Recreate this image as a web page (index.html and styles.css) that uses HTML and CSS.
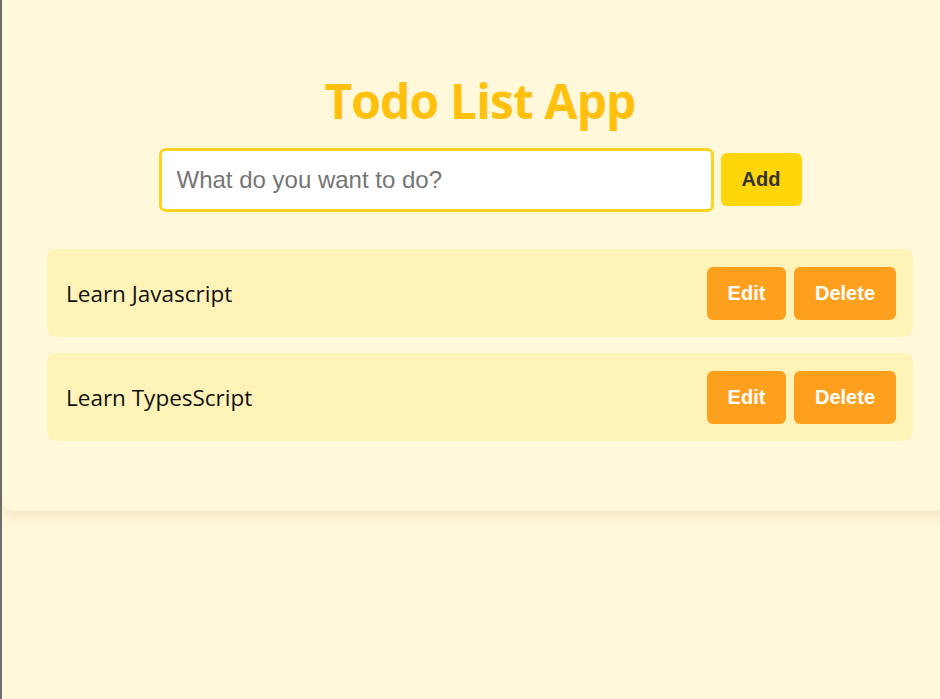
FILE: index.html
```html
<!DOCTYPE html>
<html lang="en">
<head>
<meta charset="utf-8">
<title>Todo List App</title>
<link rel="stylesheet" href="styles.css">
</head>
<body>
<div class="frame">
  <main class="card">
    <h1 class="title">Todo List App</h1>
    <form class="add-row">
      <input class="todo-input" type="text" placeholder="What do you want to do?">
      <button class="btn btn-add" type="button">Add</button>
    </form>
    <ul class="todo-list">
      <li class="todo-item">
        <span class="todo-text">Learn Javascript</span>
        <div class="actions">
          <button class="btn btn-action btn-edit" type="button">Edit</button>
          <button class="btn btn-action btn-delete" type="button">Delete</button>
        </div>
      </li>
      <li class="todo-item">
        <span class="todo-text">Learn TypesScript</span>
        <div class="actions">
          <button class="btn btn-action btn-edit" type="button">Edit</button>
          <button class="btn btn-action btn-delete" type="button">Delete</button>
        </div>
      </li>
    </ul>
  </main>
</div>
</body>
</html>
```
FILE: styles.css
```css
html, body {
  margin: 0;
  padding: 0;
  height: 100%;
  overflow: hidden;
  background: #fff8da;
}

.frame {
  display: flex;
  align-items: flex-start;
  height: 100%;
  border-left: 2px solid #6e6e6e;
  box-sizing: border-box;
}

.card {
  flex: 0 0 auto;
  width: 956px;
  box-sizing: border-box;
  margin-top: -20px;
  padding: 92px 45px 70px;
  background: #fff8da;
  border-radius: 12px;
  box-shadow: 0 4px 14px rgba(120, 100, 40, 0.13);
  display: flex;
  flex-direction: column;
  align-items: stretch;
}

.title {
  margin: 0;
  text-align: center;
  font-family: "Open Sans", "Noto Sans", sans-serif;
  font-weight: 700;
  font-size: 48px;
  line-height: 57.6px;
  color: #ffc10e;
  letter-spacing: -0.9px;
}

.add-row {
  margin: 18px 0 0;
  display: flex;
  justify-content: center;
  align-items: center;
  gap: 7px;
}

.todo-input {
  width: 555px;
  height: 64px;
  box-sizing: border-box;
  border: 3px solid #ffd21f;
  border-radius: 7px;
  background: #ffffff;
  padding: 0 15px;
  font-family: "Liberation Sans", Arial, sans-serif;
  font-size: 24px;
  color: #333;
  outline: none;
}

.todo-input::placeholder {
  color: #757575;
}

.btn {
  border: none;
  cursor: pointer;
  font-family: "Liberation Sans", Arial, sans-serif;
  font-weight: 700;
  font-size: 20px;
  height: 53px;
  border-radius: 6px;
  padding: 0;
}

.btn-add {
  width: 81px;
  background: #ffd60a;
  color: #333333;
}

.todo-list {
  list-style: none;
  margin: 37px 0 0;
  padding: 0;
  display: flex;
  flex-direction: column;
  gap: 16px;
}

.todo-item {
  height: 88px;
  box-sizing: border-box;
  display: flex;
  align-items: center;
  justify-content: space-between;
  padding: 1px 17px 0 19px;
  background: #fff3b8;
  border-radius: 9px;
}

.todo-text {
  font-family: "Open Sans", "Noto Sans", sans-serif;
  font-size: 22.5px;
  color: #111111;
  letter-spacing: 0;
}

.actions {
  display: flex;
  gap: 8px;
}

.btn-action {
  background: #ff9f1e;
  color: #ffffff;
}

.btn-edit {
  width: 79px;
}

.btn-delete {
  width: 102px;
}
```
